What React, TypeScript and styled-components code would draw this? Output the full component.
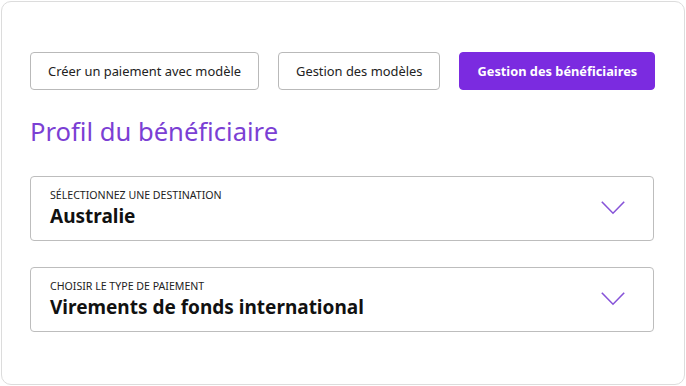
import React from "react";
import styled, { createGlobalStyle } from "styled-components";

const Global = createGlobalStyle`
  html, body { margin: 0; padding: 0; background: #ffffff; }
  body { font-family: "Noto Sans", "Open Sans", sans-serif; color: #1a1a1a; }
  * { box-sizing: border-box; }
`;

const Card = styled.div`
  margin: 1px;
  width: 684px;
  height: 384px;
  border: 1px solid #dcdcdc;
  border-radius: 10px;
  background: #fff;
  padding: 50px 30px 0 28px;
  display: flex;
  flex-direction: column;
`;

const Toolbar = styled.div`
  display: flex;
  gap: 19px;
`;

const TabButton = styled.button<{ $active?: boolean }>`
  height: 38px;
  padding: 0 ${(p) => (p.$active ? 17 : 17)}px;
  border-radius: 4px;
  font-family: "Noto Sans", "Open Sans", sans-serif;
  font-size: ${(p) => (p.$active ? 12.8 : 12.9)}px;
  font-weight: ${(p) => (p.$active ? 700 : 400)};
  color: ${(p) => (p.$active ? "#ffffff" : "#222222")};
  background: ${(p) => (p.$active ? "#7b2be0" : "#ffffff")};
  border: 1px solid ${(p) => (p.$active ? "#7b2be0" : "#b9b9b9")};
  display: flex;
  align-items: center;
  white-space: nowrap;
`;

const Title = styled.h1`
  margin: 26px 0 0 0;
  font-size: 25.6px;
  font-weight: 400;
  line-height: 32px;
  color: #7b3fd4;
`;

const Fields = styled.div`
  display: flex;
  flex-direction: column;
  gap: 26px;
  margin-top: 28px;
`;

const Select = styled.div`
  height: 65px;
  border: 1px solid #bdbdbd;
  border-radius: 4px;
  padding: 10px 28px 0 19px;
  display: flex;
  align-items: flex-start;
  justify-content: space-between;
`;

const SelectText = styled.div`
  display: flex;
  flex-direction: column;
`;

const Label = styled.span`
  font-size: 10.6px;
  line-height: 16px;
  color: #222;
  text-transform: uppercase;
`;

const Value = styled.span`
  font-size: 19px;
  line-height: 26px;
  font-weight: 700;
  color: #111;
`;

const Chevron = styled.svg`
  margin-top: 14px;
  flex-shrink: 0;
`;

const ChevronDown = () => (
  <Chevron width="24" height="14" viewBox="0 0 24 14">
    <path d="M0.8 0.8 L12 12.2 L23.2 0.8" fill="none" stroke="#8653d8" strokeWidth="1.6" />
  </Chevron>
);

const fields = [
  { label: "Sélectionnez une destination", value: "Australie" },
  { label: "Choisir le type de paiement", value: "Virements de fonds international" },
];

export default function App() {
  return (
    <>
      <Global />
      <Card>
        <Toolbar>
          <TabButton>Créer un paiement avec modèle</TabButton>
          <TabButton>Gestion des modèles</TabButton>
          <TabButton $active>Gestion des bénéficiaires</TabButton>
        </Toolbar>
        <Title>Profil du bénéficiaire</Title>
        <Fields>
          {fields.map((f) => (
            <Select key={f.label}>
              <SelectText>
                <Label>{f.label}</Label>
                <Value>{f.value}</Value>
              </SelectText>
              <ChevronDown />
            </Select>
          ))}
        </Fields>
      </Card>
    </>
  );
}
